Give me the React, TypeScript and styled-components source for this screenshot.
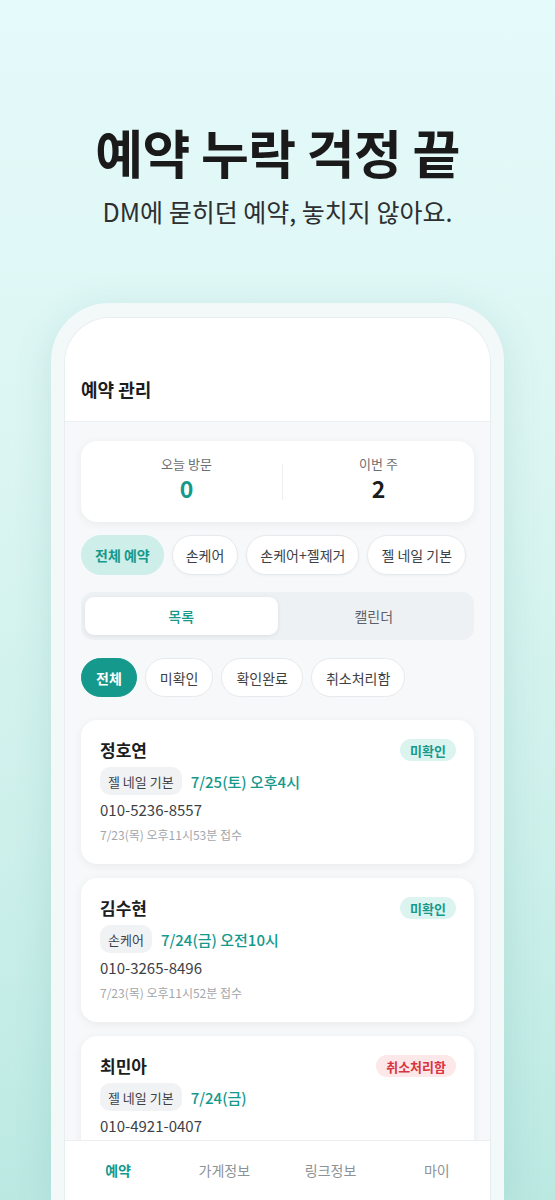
import React from 'react';
import styled, { createGlobalStyle } from 'styled-components';

const teal = '#14998c';

const GlobalStyle = createGlobalStyle`
  html, body {
    margin: 0;
    padding: 0;
  }
  body {
    font-family: "Noto Sans CJK KR", "Noto Sans", sans-serif;
    color: #1b1d1f;
  }
  * {
    box-sizing: border-box;
  }
`;

const Page = styled.div`
  height: 1200px;
  overflow: hidden;
  display: flex;
  flex-direction: column;
  align-items: center;
  background: linear-gradient(180deg, #e5fafb 0%, #dcf6f3 35%, #cdf0eb 70%, #bbe9e2 100%);
`;

const Hero = styled.header`
  padding-top: 120px;
  text-align: center;
`;

const Headline = styled.h1`
  margin: 0;
  font-size: 52px;
  line-height: 64px;
  font-weight: 700;
  letter-spacing: -0.6px;
  color: #1a1a1a;
`;

const Subline = styled.p`
  margin: 10px 0 0;
  font-size: 25px;
  line-height: 34px;
  font-weight: 400;
  color: #2d2f31;
`;

const PhoneFrame = styled.div`
  margin-top: 75px;
  width: 453px;
  flex: 1;
  min-height: 0;
  padding: 14px 13px 0;
  border-radius: 58px 58px 0 0;
  background: #f3f8f9;
  box-shadow: 0 8px 40px rgba(20, 110, 100, 0.12);
  display: flex;
`;

const Screen = styled.div`
  flex: 1;
  min-height: 0;
  display: flex;
  flex-direction: column;
  overflow: hidden;
  border-radius: 46px 46px 0 0;
  border: 1px solid #e8eef0;
  border-bottom: none;
  background: #f6f8fa;
`;

const ScreenHeader = styled.div`
  height: 104px;
  flex-shrink: 0;
  display: flex;
  align-items: flex-end;
  padding: 0 16px 19px;
  background: #fff;
  border-bottom: 1px solid #eef1f3;
`;

const ScreenTitle = styled.h2`
  margin: 0;
  font-size: 18px;
  line-height: 26px;
  font-weight: 700;
  color: #1b1d1f;
`;

const Content = styled.div`
  flex: 1;
  min-height: 0;
  overflow: hidden;
  padding: 19px 16px 0;
  display: flex;
  flex-direction: column;
`;

const StatsCard = styled.div`
  flex-shrink: 0;
  display: grid;
  grid-template-columns: 1fr 1px 1fr;
  align-items: center;
  height: 81px;
  padding: 0 0 0 10px;
  background: #fff;
  border-radius: 16px;
  box-shadow: 0 2px 10px rgba(0, 0, 0, 0.06);
`;

const Stat = styled.div`
  display: flex;
  flex-direction: column;
  align-items: center;
  padding-bottom: 6px;
`;

const StatLabel = styled.span`
  font-size: 13px;
  line-height: 18px;
  color: #6b6f73;
`;

const StatValue = styled.span<{ $accent?: boolean }>`
  font-size: 23px;
  line-height: 30px;
  font-weight: 700;
  color: ${({ $accent }) => ($accent ? teal : '#1b1d1f')};
`;

const StatDivider = styled.div`
  width: 1px;
  height: 36px;
  background: #eceef0;
`;

const ChipRow = styled.div<{ $top: number }>`
  flex-shrink: 0;
  display: flex;
  gap: 8px;
  margin-top: ${({ $top }) => $top}px;
`;

const CategoryChip = styled.button<{ $active?: boolean }>`
  flex-shrink: 0;
  white-space: nowrap;
  height: 40px;
  padding: 0 13px;
  border-radius: 20px;
  font-family: inherit;
  font-size: 14px;
  font-weight: ${({ $active }) => ($active ? 700 : 400)};
  color: ${({ $active }) => ($active ? teal : '#3d4145')};
  background: ${({ $active }) => ($active ? '#cdeee9' : '#fff')};
  border: 1px solid ${({ $active }) => ($active ? '#cdeee9' : '#e7eaec')};
  box-shadow: ${({ $active }) => ($active ? 'none' : '0 1px 3px rgba(0,0,0,0.04)')};
`;

const Segmented = styled.div`
  flex-shrink: 0;
  margin-top: 17px;
  height: 48px;
  padding: 5px 4px;
  display: grid;
  grid-template-columns: 1fr 1fr;
  background: #eef1f4;
  border-radius: 12px;
`;

const Segment = styled.div<{ $active?: boolean }>`
  display: flex;
  align-items: center;
  justify-content: center;
  border-radius: 9px;
  font-size: 14px;
  font-weight: ${({ $active }) => ($active ? 500 : 400)};
  color: ${({ $active }) => ($active ? teal : '#5c6166')};
  background: ${({ $active }) => ($active ? '#fff' : 'transparent')};
  box-shadow: ${({ $active }) => ($active ? '0 1px 4px rgba(0,0,0,0.08)' : 'none')};
`;

const StatusChip = styled.button<{ $active?: boolean }>`
  flex-shrink: 0;
  white-space: nowrap;
  height: 39px;
  padding: 0 14px;
  border-radius: 20px;
  font-family: inherit;
  font-size: 14px;
  font-weight: ${({ $active }) => ($active ? 700 : 400)};
  color: ${({ $active }) => ($active ? '#fff' : '#3d4145')};
  background: ${({ $active }) => ($active ? teal : '#fff')};
  border: 1px solid ${({ $active }) => ($active ? teal : '#e7eaec')};
`;

const CardList = styled.div`
  margin-top: 23px;
  display: flex;
  flex-direction: column;
  gap: 14px;
`;

const Card = styled.div`
  background: #fff;
  border-radius: 16px;
  padding: 17px 18px 20px 19px;
  box-shadow: 0 2px 10px rgba(0, 0, 0, 0.06);
  flex-shrink: 0;
`;

const CardTop = styled.div`
  display: flex;
  align-items: center;
  justify-content: space-between;
`;

const Name = styled.span`
  font-size: 17px;
  line-height: 26px;
  font-weight: 700;
  color: #1b1d1f;
`;

const Badge = styled.span<{ $tone: 'pending' | 'cancel' }>`
  padding: 0 10px;
  height: 22px;
  display: inline-flex;
  align-items: center;
  border-radius: 11px;
  font-size: 13px;
  font-weight: 700;
  color: ${({ $tone }) => ($tone === 'cancel' ? '#d9343f' : teal)};
  background: ${({ $tone }) => ($tone === 'cancel' ? '#fde8e9' : '#dcf4f0')};
`;

const ServiceRow = styled.div`
  margin-top: 4px;
  display: flex;
  align-items: center;
  gap: 9px;
`;

const ServiceTag = styled.span`
  height: 28px;
  padding: 0 8px;
  display: inline-flex;
  align-items: center;
  border-radius: 10px;
  background: #f1f2f4;
  font-size: 13px;
  color: #3d4145;
`;

const When = styled.span`
  font-size: 15px;
  font-weight: 500;
  color: ${teal};
`;

const Phone = styled.div`
  margin-top: 3px;
  font-size: 15px;
  line-height: 24px;
  color: #3d4145;
`;

const Received = styled.div`
  margin-top: 4px;
  font-size: 12px;
  line-height: 18px;
  color: #a3a7ab;
`;

const NavBar = styled.nav`
  height: 60px;
  flex-shrink: 0;
  display: grid;
  grid-template-columns: repeat(4, 1fr);
  align-items: center;
  background: #fff;
  border-top: 1px solid #eceff1;
  padding-bottom: 1px;
`;

const NavItem = styled.span<{ $active?: boolean }>`
  text-align: center;
  font-size: 14px;
  font-weight: ${({ $active }) => ($active ? 700 : 400)};
  color: ${({ $active }) => ($active ? teal : '#8d9296')};
`;

type Reservation = {
  name: string;
  status: 'pending' | 'cancel';
  service: string;
  when: string;
  phone: string;
  received?: string;
};

const reservations: Reservation[] = [
  {
    name: '정호연',
    status: 'pending',
    service: '젤 네일 기본',
    when: '7/25(토) 오후4시',
    phone: '010-5236-8557',
    received: '7/23(목) 오후11시53분 접수',
  },
  {
    name: '김수현',
    status: 'pending',
    service: '손케어',
    when: '7/24(금) 오전10시',
    phone: '010-3265-8496',
    received: '7/23(목) 오후11시52분 접수',
  },
  {
    name: '최민아',
    status: 'cancel',
    service: '젤 네일 기본',
    when: '7/24(금)',
    phone: '010-4921-0407',
  },
];

const categories = ['전체 예약', '손케어', '손케어+젤제거', '젤 네일 기본'];
const statuses = ['전체', '미확인', '확인완료', '취소처리함'];
const tabs = ['예약', '가게정보', '링크정보', '마이'];

const App: React.FC = () => {
  return (
    <>
      <GlobalStyle />
      <Page>
        <Hero>
          <Headline>예약 누락 걱정 끝</Headline>
          <Subline>DM에 묻히던 예약, 놓치지 않아요.</Subline>
        </Hero>

        <PhoneFrame>
          <Screen>
            <ScreenHeader>
              <ScreenTitle>예약 관리</ScreenTitle>
            </ScreenHeader>

            <Content>
              <StatsCard>
                <Stat>
                  <StatLabel>오늘 방문</StatLabel>
                  <StatValue $accent>0</StatValue>
                </Stat>
                <StatDivider />
                <Stat>
                  <StatLabel>이번 주</StatLabel>
                  <StatValue>2</StatValue>
                </Stat>
              </StatsCard>

              <ChipRow $top={13}>
                {categories.map((c, i) => (
                  <CategoryChip key={c} $active={i === 0}>
                    {c}
                  </CategoryChip>
                ))}
              </ChipRow>

              <Segmented>
                <Segment $active>목록</Segment>
                <Segment>캘린더</Segment>
              </Segmented>

              <ChipRow $top={18}>
                {statuses.map((s, i) => (
                  <StatusChip key={s} $active={i === 0}>
                    {s}
                  </StatusChip>
                ))}
              </ChipRow>

              <CardList>
                {reservations.map((r) => (
                  <Card key={r.name}>
                    <CardTop>
                      <Name>{r.name}</Name>
                      <Badge $tone={r.status}>
                        {r.status === 'cancel' ? '취소처리함' : '미확인'}
                      </Badge>
                    </CardTop>
                    <ServiceRow>
                      <ServiceTag>{r.service}</ServiceTag>
                      <When>{r.when}</When>
                    </ServiceRow>
                    <Phone>{r.phone}</Phone>
                    {r.received && <Received>{r.received}</Received>}
                  </Card>
                ))}
              </CardList>
            </Content>

            <NavBar>
              {tabs.map((t, i) => (
                <NavItem key={t} $active={i === 0}>
                  {t}
                </NavItem>
              ))}
            </NavBar>
          </Screen>
        </PhoneFrame>
      </Page>
    </>
  );
};

export default App;
